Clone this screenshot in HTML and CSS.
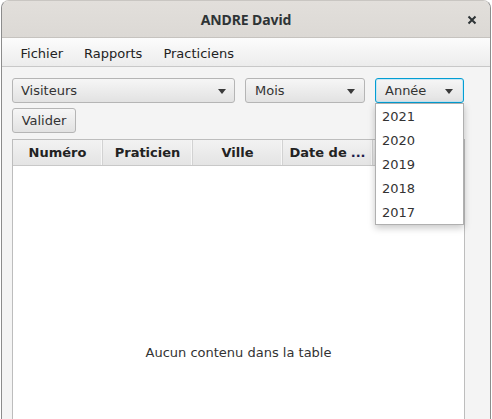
FILE: index.html
```html
<!DOCTYPE html>
<html lang="fr">
<head>
<meta charset="utf-8">
<title>ANDRE David</title>
<link rel="stylesheet" href="styles.css">
</head>
<body>
<div class="window">
  <div class="titlebar">
    <span></span>
    <span class="title">ANDRE David</span>
    <svg class="close" width="10" height="10" viewBox="0 0 10 10"><path d="M1.5 1.5 L8.5 8.5 M8.5 1.5 L1.5 8.5" stroke="#2e3436" stroke-width="2" stroke-linecap="butt"/></svg>
  </div>
  <div class="menubar">
    <span class="menu">Fichier</span>
    <span class="menu">Rapports</span>
    <span class="menu">Practiciens</span>
  </div>
  <div class="content">
    <div class="filters">
      <div class="combo combo-visiteurs"><span>Visiteurs</span><i class="arrow"></i></div>
      <div class="combo combo-mois"><span>Mois</span><i class="arrow"></i></div>
      <div class="combo combo-annee focused"><span>Année</span><i class="arrow"></i>
        <ul class="popup">
          <li>2021</li>
          <li>2020</li>
          <li>2019</li>
          <li>2018</li>
          <li>2017</li>
        </ul>
      </div>
    </div>
    <div class="actions"><button class="btn">Valider</button></div>
    <div class="table">
      <div class="thead">
        <div class="th">Numéro</div>
        <div class="th">Praticien</div>
        <div class="th">Ville</div>
        <div class="th">Date de <span class="ell">...</span></div>
        <div class="th filler"></div>
      </div>
      <div class="tbody"><span class="placeholder">Aucun contenu dans la table</span></div>
    </div>
  </div>
</div>
</body>
</html>
```
FILE: styles.css
```css
html, body {
  margin: 0;
  padding: 0;
  background: #ffffff;
  overflow: hidden;
}
body {
  width: 492px;
  height: 419px;
  font-family: "DejaVu Sans", sans-serif;
  font-size: 13px;
  color: #333333;
}
.window {
  margin-left: 1px;
  width: 488px;
  height: 418px;
  border: 1px solid #8c8c8c;
  border-top-color: #c9c6c2;
  border-radius: 8px 8px 0 0;
  overflow: hidden;
  display: flex;
  flex-direction: column;
  background: #f4f4f4;
}
.titlebar {
  height: 36px;
  flex: none;
  display: grid;
  grid-template-columns: 1fr auto 1fr;
  align-items: center;
  background: linear-gradient(#e2dfdb, #dcd9d5);
  border-bottom: 1px solid #c6c3bf;
}
.title {
  font-family: "Noto Sans", "DejaVu Sans", sans-serif;
  font-weight: bold;
  font-size: 14px;
  color: #2e3436;
  letter-spacing: -0.1px;
}
.close {
  justify-self: end;
  margin-right: 13px;
  margin-top: 1px;
}
.menubar {
  height: 28px;
  flex: none;
  display: flex;
  align-items: center;
  padding-left: 8px;
  background: linear-gradient(#fcfcfc, #ececec);
  border-bottom: 1px solid #c8c8c8;
}
.menu {
  padding: 0 10.5px;
  color: #222;
  line-height: 16px;
  margin-top: 3px;
}
.content {
  flex: 1;
  padding: 11px 25px 0 10px;
  display: flex;
  flex-direction: column;
  min-height: 0;
}
.filters {
  display: flex;
  gap: 10px;
}
.combo {
  position: relative;
  box-sizing: border-box;
  height: 25px;
  display: flex;
  align-items: center;
  justify-content: space-between;
  padding: 0 9px 0 9px;
  border: 1px solid #b5b5b5;
  border-radius: 3px;
  background: linear-gradient(#f6f6f6, #e2e2e2);
  color: #333;
}
.combo span { line-height: 16px; }
.combo-visiteurs { width: 223px; padding-left: 8px; padding-right: 8px; }
.combo-mois { width: 120px; }
.combo-annee { width: 89px; padding-right: 10px; }
.combo.focused {
  border-color: #039ed3;
  box-shadow: inset 0 0 0 1px #c6e6f4;
}
.arrow {
  width: 0;
  height: 0;
  border-left: 4px solid transparent;
  border-right: 4px solid transparent;
  border-top: 5px solid #3a3a3a;
  margin-top: 1px;
}
.popup {
  position: absolute;
  top: 24px;
  left: -1px;
  width: 89px;
  box-sizing: border-box;
  margin: 0;
  padding: 0;
  list-style: none;
  background: #ffffff;
  border: 1px solid #b0b0b0;
  box-shadow: 0 3px 7px rgba(0, 0, 0, 0.22);
  z-index: 5;
}
.popup li {
  height: 24px;
  line-height: 26px;
  padding-left: 6px;
  color: #333;
  font-size: 13px;
}
.actions {
  margin-top: 5px;
  display: flex;
}
.btn {
  box-sizing: border-box;
  height: 25px;
  width: 64px;
  padding: 0;
  font-family: "DejaVu Sans", sans-serif;
  font-size: 13px;
  color: #333;
  border: 1px solid #b5b5b5;
  border-radius: 3px;
  background: linear-gradient(#f6f6f6, #e2e2e2);
}
.table {
  margin-top: 6px;
  flex: 1;
  display: flex;
  flex-direction: column;
  border: 1px solid #bdbdbd;
  border-bottom: none;
  background: #ffffff;
  min-height: 0;
}
.thead {
  height: 25px;
  flex: none;
  display: flex;
  background: linear-gradient(#f2f2f2, #e4e4e4);
  border-bottom: 1px solid #c8c8c8;
}
.th {
  box-sizing: border-box;
  width: 90px;
  flex: none;
  display: flex;
  align-items: center;
  justify-content: center;
  font-weight: bold;
  color: #222;
  border-right: 1px solid #d2d2d2;
  box-shadow: inset -1px 0 0 #f7f7f7;
}
.th .ell { color: #1c1c4a; margin-left: 4px; }
.th.filler { flex: 1; border-right: none; box-shadow: none; }
.tbody {
  flex: 1;
  display: flex;
  justify-content: center;
  padding-top: 179px;
}
.placeholder {
  color: #333;
  line-height: 16px;
  height: 16px;
}
```
